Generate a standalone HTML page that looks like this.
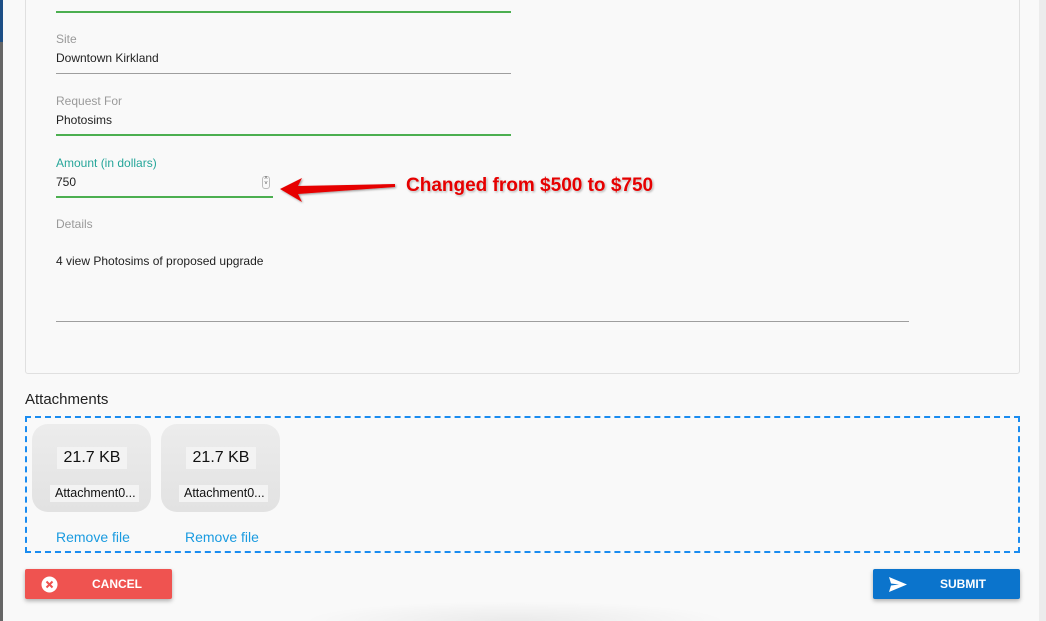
<!DOCTYPE html>
<html style="overflow:hidden;height:621px"><head><style>
*{box-sizing:border-box;margin:0;padding:0}
html,body{width:1046px;height:621px;overflow:hidden}
body{background:#f9f9f9;font-family:"Liberation Sans",sans-serif;position:relative;color:#222}
.abs{position:absolute}
.lbl{font-size:12px;color:#9a9a9a}
.val{font-size:12px;color:#222}
.line{height:1px;background:#9e9e9e}
.gline{height:2px;background:#4caf50}
.att{position:absolute;top:424px;width:119px;height:88px;border-radius:16px;background:linear-gradient(#ececec,#e2e2e2)}
.sz{position:absolute;left:25px;top:23px;width:70px;height:22px;background:#f3f3f3;font-size:16px;text-align:center;line-height:22px;color:#111;font-weight:500}
.nm{position:absolute;left:18px;top:61px;width:89px;height:17px;background:#f3f3f3;font-size:12.5px;line-height:17px;padding-left:5px;color:#111;white-space:nowrap;overflow:hidden}
.rm{position:absolute;top:529px;font-size:14px;color:#1a9be0}
.btn{position:absolute;top:569px;height:30px;border-radius:2px;box-shadow:0 2px 4px rgba(0,0,0,.3);color:#fff;font-weight:bold;font-size:12px;line-height:30px}
</style></head><body>
<div class="abs" style="left:0;top:0;width:3px;height:621px;background:#666"></div>
<div class="abs" style="left:0;top:0;width:3px;height:42px;background:#1d4f86"></div>
<div class="abs" style="left:1039px;top:0;width:7px;height:621px;background:#ececec"></div>
<div class="abs" style="left:25px;top:-10px;width:995px;height:384px;border:1px solid #e0e0e0;border-radius:3px"></div>
<div class="abs gline" style="left:56px;top:11px;width:455px"></div>

<div class="abs lbl" style="left:56px;top:32px">Site</div>
<div class="abs val" style="left:56px;top:51px">Downtown Kirkland</div>
<div class="abs line" style="left:56px;top:73px;width:455px"></div>

<div class="abs lbl" style="left:56px;top:94px">Request For</div>
<div class="abs val" style="left:56px;top:113px">Photosims</div>
<div class="abs gline" style="left:56px;top:134px;width:455px"></div>

<div class="abs lbl" style="left:56px;top:156px;color:#26a69a">Amount (in dollars)</div>
<div class="abs val" style="left:56px;top:175px">750</div>
<div class="abs" style="left:262px;top:176px;width:8px;height:13px;border:1px solid #bbb;border-radius:3px;font-size:6px;line-height:5px;text-align:center;color:#555">˄<br>˅</div>
<div class="abs gline" style="left:56px;top:196px;width:217px"></div>
<svg class="abs" style="left:278px;top:176px" width="120" height="30"><defs><filter id="s"><feDropShadow dx="1" dy="1" stdDeviation="1" flood-opacity=".4"/></filter></defs><path d="M2 13 L24 2 L20 10 L117 8 L117 11 L20 18 L24 26 Z" fill="#e60000" filter="url(#s)"/></svg>
<div class="abs" style="left:406px;top:175px;font-size:19px;font-weight:bold;color:#e60000;text-shadow:0 0 2px #fff,1px 1px 2px #999">Changed from $500 to $750</div>

<div class="abs lbl" style="left:56px;top:217px">Details</div>
<div class="abs val" style="left:56px;top:254px">4 view Photosims of proposed upgrade</div>
<div class="abs line" style="left:56px;top:321px;width:853px"></div>

<div class="abs" style="left:25px;top:391px;font-size:15px;color:#222">Attachments</div>
<div class="abs" style="left:25px;top:416px;width:995px;height:137px;border:2px dashed #1a8cf0"></div>
<div class="att" style="left:32px"><div class="sz">21.7 KB</div><div class="nm">Attachment0...</div></div>
<div class="att" style="left:161px"><div class="sz">21.7 KB</div><div class="nm">Attachment0...</div></div>
<div class="rm" style="left:56px">Remove file</div>
<div class="rm" style="left:185px">Remove file</div>

<div class="btn" style="left:25px;width:147px;background:#ef5350"><svg class="abs" style="left:16px;top:7px" width="17" height="17"><circle cx="8.5" cy="8.5" r="8" fill="#fff"/><path d="M5.5 5.5L11.5 11.5M11.5 5.5L5.5 11.5" stroke="#ef5350" stroke-width="2"/></svg><span class="abs" style="left:67px">CANCEL</span></div>
<div class="btn" style="left:873px;width:147px;background:#0b74cc"><svg class="abs" style="left:16px;top:8px" width="18" height="15"><path d="M0 0L18 7.5L0 15L2 8.5L10 7.5L2 6.5Z" fill="#fff"/></svg><span class="abs" style="left:67px">SUBMIT</span></div>
<div class="abs" style="left:300px;top:601px;width:430px;height:20px;background:radial-gradient(ellipse at 50% 100%,rgba(0,0,0,.06),rgba(0,0,0,0) 70%)"></div>
</body></html>
